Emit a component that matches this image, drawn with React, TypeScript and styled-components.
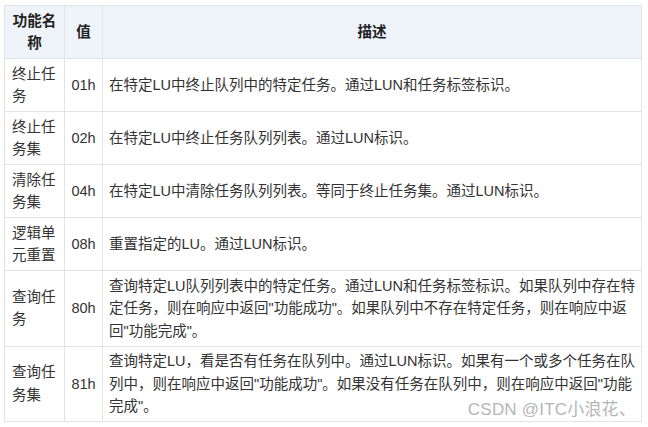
import React from "react"
import styled, { createGlobalStyle } from "styled-components"

const GlobalStyle = createGlobalStyle`
  html, body {
    margin: 0;
    padding: 0;
    background: #ffffff;
  }
  body {
    font-family: "Liberation Sans", "Noto Sans CJK SC", sans-serif;
  }
`

const Page = styled.div`
  position: relative;
  width: 648px;
  height: 427px;
  padding: 5px 0 0 4px;
  box-sizing: border-box;
  overflow: hidden;
  background: #fff;
`

const Table = styled.table`
  border-collapse: collapse;
  table-layout: fixed;
  width: 637px;
  font-size: 14.5px;
  line-height: 22.5px;
  color: #333;
`

const HeadCell = styled.th<{ $width: number }>`
  box-sizing: border-box;
  width: ${(p) => p.$width}px;
  background: #eff3fa;
  border: 1px solid #e3e3e3;
  padding: 3px 7px;
  font-weight: 700;
  color: #222;
  text-align: center;
  vertical-align: middle;
  height: 53px;
`

const Cell = styled.td`
  border: 1px solid #e3e3e3;
  padding: 3.5px 6px 3.5px 7px;
  vertical-align: middle;
  word-break: break-all;
`

const CodeCell = styled(Cell)`
  padding: 3.5px 0;
  text-align: center;
  white-space: nowrap;
`

const DescCell = styled(Cell)`
  padding: 3.5px 0 3.5px 6px;
`

const Watermark = styled.div`
  position: absolute;
  right: 12px;
  bottom: 7px;
  font-size: 17px;
  color: #b5b5b5;
  letter-spacing: 0.2px;
  text-shadow: 1px 1px 0 #fff, -1px -1px 0 #fff;
`

const rows = [
  { name: "终止任务", code: "01h", desc: "在特定LU中终止队列中的特定任务。通过LUN和任务标签标识。" },
  { name: "终止任务集", code: "02h", desc: "在特定LU中终止任务队列列表。通过LUN标识。" },
  { name: "清除任务集", code: "04h", desc: "在特定LU中清除任务队列列表。等同于终止任务集。通过LUN标识。" },
  { name: "逻辑单元重置", code: "08h", desc: "重置指定的LU。通过LUN标识。" },
  {
    name: "查询任务",
    code: "80h",
    desc: "查询特定LU队列列表中的特定任务。通过LUN和任务标签标识。如果队列中存在特定任务，则在响应中返回\"功能成功\"。如果队列中不存在特定任务，则在响应中返回\"功能完成\"。",
  },
  {
    name: "查询任务集",
    code: "81h",
    desc: "查询特定LU，看是否有任务在队列中。通过LUN标识。如果有一个或多个任务在队列中，则在响应中返回\"功能成功\"。如果没有任务在队列中，则在响应中返回\"功能完成\"。",
  },
]

const App: React.FC = () => {
  return (
    <Page>
      <GlobalStyle />
      <Table>
        <thead>
          <tr>
            <HeadCell $width={60}>功能名称</HeadCell>
            <HeadCell $width={38}>值</HeadCell>
            <HeadCell $width={539}>描述</HeadCell>
          </tr>
        </thead>
        <tbody>
          {rows.map((r) => (
            <tr key={r.code}>
              <Cell>{r.name}</Cell>
              <CodeCell>{r.code}</CodeCell>
              <DescCell>{r.desc}</DescCell>
            </tr>
          ))}
        </tbody>
      </Table>
      <Watermark>CSDN @ITC小浪花、</Watermark>
    </Page>
  )
}

export default App
